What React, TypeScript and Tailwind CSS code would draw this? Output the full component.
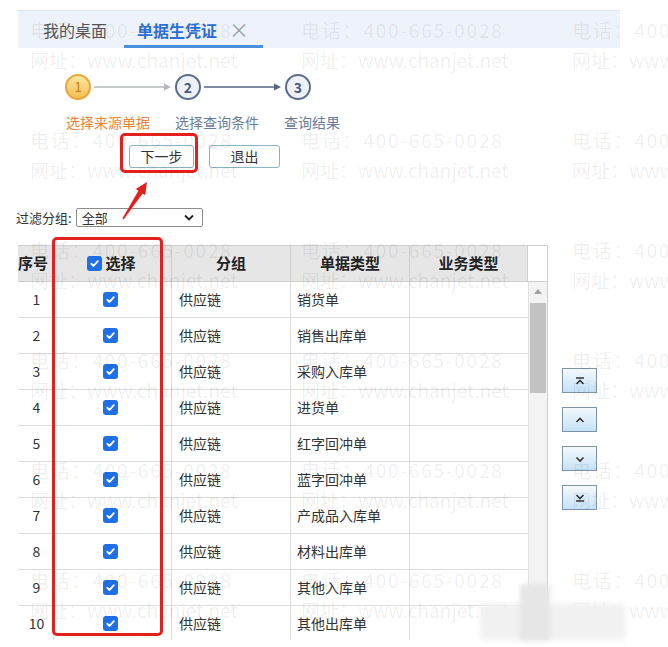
import React from "react";

const rows = [
  { no: 1, group: "供应链", type: "销货单" },
  { no: 2, group: "供应链", type: "销售出库单" },
  { no: 3, group: "供应链", type: "采购入库单" },
  { no: 4, group: "供应链", type: "进货单" },
  { no: 5, group: "供应链", type: "红字回冲单" },
  { no: 6, group: "供应链", type: "蓝字回冲单" },
  { no: 7, group: "供应链", type: "产成品入库单" },
  { no: 8, group: "供应链", type: "材料出库单" },
  { no: 9, group: "供应链", type: "其他入库单" },
  { no: 10, group: "供应链", type: "其他出库单" },
];

const Check: React.FC = () => (
  <div className="flex h-[15px] w-[15px] items-center justify-center rounded-[3px] bg-[#1f6fe5]">
    <svg width="11" height="11" viewBox="0 0 12 12">
      <path d="M2.5 6.3 L5 8.7 L9.6 3.4" fill="none" stroke="#fff" strokeWidth="2" strokeLinecap="round" strokeLinejoin="round" />
    </svg>
  </div>
);

const StepLine: React.FC<{ color: string }> = ({ color }) => (
  <svg width="78" height="10" viewBox="0 0 78 10" className="mx-[3px]">
    <line x1="0" y1="5" x2="72" y2="5" stroke={color} strokeWidth="1.5" />
    <path d="M70 1.5 L77 5 L70 8.5 Z" fill={color} />
  </svg>
);

const SideBtn: React.FC<{ kind: "top" | "up" | "down" | "bottom" }> = ({ kind }) => (
  <div className="flex h-[25px] w-[35px] items-center justify-center border border-[#7f93a6] bg-gradient-to-b from-[#f4f9fd] to-[#c5e2f7]">
    <svg width="12" height="10" viewBox="0 0 12 10">
      {kind === "top" && (
        <>
          <line x1="2" y1="2" x2="10" y2="2" stroke="#333" strokeWidth="1.5" />
          <path d="M2.5 8 L6 4.5 L9.5 8" fill="none" stroke="#333" strokeWidth="1.6" />
        </>
      )}
      {kind === "up" && <path d="M2.5 7 L6 3.5 L9.5 7" fill="none" stroke="#333" strokeWidth="1.6" />}
      {kind === "down" && <path d="M2.5 3.5 L6 7 L9.5 3.5" fill="none" stroke="#333" strokeWidth="1.6" />}
      {kind === "bottom" && (
        <>
          <path d="M2.5 2 L6 5.5 L9.5 2" fill="none" stroke="#333" strokeWidth="1.6" />
          <line x1="2" y1="8" x2="10" y2="8" stroke="#333" strokeWidth="1.5" />
        </>
      )}
    </svg>
  </div>
);

const Watermark: React.FC = () => {
  const cols = [30, 301, 572];
  const rowsY = [20, 130, 240, 350, 460, 570];
  return (
    <div className="pointer-events-none absolute inset-0 text-[19px] text-black/[0.07]">
      {rowsY.map((y) =>
        cols.map((x) => (
          <div key={`${x}-${y}`} className="absolute whitespace-nowrap leading-[30px]" style={{ left: x, top: y - 5 }}>
            <div className="tracking-[1.8px]">电话：400-665-0028</div>
            <div className="tracking-[0px]">网址：www.chanjet.net</div>
          </div>
        ))
      )}
    </div>
  );
};

const App: React.FC = () => {
  return (
    <div
      className="relative h-[647px] w-[668px] overflow-hidden bg-white text-[#333]"
      style={{ fontFamily: '"Noto Sans CJK SC", "Liberation Sans", sans-serif' }}
    >
      {/* 頁籤列 */}
      <div className="ml-[18px] mt-[10px] flex h-[38px] w-[602px] items-stretch border-t border-[#dfe7f1] bg-[#eef3fb]">
        <div className="flex items-center pl-[25px] pr-[17px] text-[16px] text-[#555]">我的桌面</div>
        <div className="flex items-center border-b-[3px] border-[#4a8ee2] pl-[13px] pr-[14px] pt-[3px]">
          <span className="text-[16px] font-bold text-[#2f6fd6]">单据生凭证</span>
          <span className="ml-[12px] text-[20px] leading-none text-[#9aa3ad]">×</span>
        </div>
      </div>

      {/* 步驟 */}
      <div className="ml-[65px] mt-[26px] flex h-[26px] items-center">
        <div className="flex h-[26px] w-[26px] items-center justify-center rounded-full border-2 border-[#e7a73a] bg-gradient-to-b from-[#fce6a0] to-[#f2bf4a] text-[13px] text-[#c27c16]">
          1
        </div>
        <StepLine color="#b5b8bd" />
        <div className="flex h-[26px] w-[26px] items-center justify-center rounded-full border-2 border-[#5c6d8a] bg-[#eef2f8] text-[14px] font-bold text-[#4a5b7a]">
          2
        </div>
        <StepLine color="#56667f" />
        <div className="flex h-[26px] w-[26px] items-center justify-center rounded-full border-2 border-[#5c6d8a] bg-[#eef2f8] text-[14px] font-bold text-[#4a5b7a]">
          3
        </div>
      </div>
      <div className="ml-[66px] mt-[14px] flex h-[16px] items-center text-[14px] leading-[16px]">
        <span className="w-[109px] text-[#e8853a]">选择来源单据</span>
        <span className="w-[109px] text-[#6a7c9c]">选择查询条件</span>
        <span className="text-[#6a7c9c]">查询结果</span>
      </div>

      {/* 按鈕 */}
      <div className="ml-[129px] mt-[15px] flex h-[23px] gap-[15px]">
        <button className="h-[23px] w-[65px] rounded-[3px] border border-[#8ab4c6] bg-white text-[14px] text-[#333]">下一步</button>
        <button className="h-[23px] w-[71px] rounded-[3px] border border-[#8ab4c6] bg-white text-[14px] text-[#333]">退出</button>
      </div>

      {/* 過濾 */}
      <div className="ml-[16px] mt-[40px] flex h-[19px] items-center text-[13px]">
        <span className="text-[#333]">过滤分组:</span>
        <div className="ml-[4px] flex h-[19px] w-[127px] items-center justify-between rounded-[2px] border border-[#8d8d8d] bg-white pl-[5px] pr-[8px]">
          <span className="text-[13px] leading-none">全部</span>
          <svg width="10" height="7" viewBox="0 0 10 7">
            <path d="M1 1.5 L5 5.5 L9 1.5" fill="none" stroke="#222" strokeWidth="1.8" />
          </svg>
        </div>
      </div>

      {/* 表格 + 側邊按鈕 */}
      <div className="ml-[18px] mt-[18px] flex">
        <div className="h-[395px] w-[530px] overflow-hidden border-r border-t border-[#cfcfcf]">
          <div className="flex h-[36px] border-b border-[#cfcfcf] text-[15px] font-bold text-[#222]">
            <div className="flex w-[35px] items-center bg-[#e6e6e6]">序号</div>
            <div className="flex w-[118px] items-center justify-center gap-[3px] border-l border-[#cfcfcf] bg-[#e6e6e6] pr-[2px]">
              <Check />
              <span>选择</span>
            </div>
            <div className="flex w-[119px] items-center justify-center border-l border-[#cfcfcf] bg-[#e6e6e6]">分组</div>
            <div className="flex w-[119px] items-center justify-center border-l border-[#cfcfcf] bg-[#e6e6e6]">单据类型</div>
            <div className="flex w-[119px] items-center justify-center border-x border-[#cfcfcf] bg-[#e6e6e6]">业务类型</div>
            <div className="flex-1 bg-white" />
          </div>
          <div className="flex">
            <div className="w-[510px]">
              {rows.map((r) => (
                <div key={r.no} className="flex h-[36px] border-b border-[#dcdcdc] text-[14px] text-[#333]">
                  <div className="flex w-[35px] items-center justify-center pl-[2px]">{r.no}</div>
                  <div className="flex w-[118px] items-center justify-center border-l border-[#dcdcdc] pr-[4px]">
                    <Check />
                  </div>
                  <div className="flex w-[119px] items-center border-l border-[#dcdcdc] pl-[7px]">{r.group}</div>
                  <div className="flex w-[119px] items-center border-l border-[#dcdcdc] pl-[6px]">{r.type}</div>
                  <div className="w-[119px] border-l border-[#dcdcdc]" />
                </div>
              ))}
            </div>
            <div className="flex w-[20px] flex-col items-center border-l border-[#e2e2e2] bg-[#f3f3f3] pt-[7px]">
              <svg width="8" height="5" viewBox="0 0 8 5">
                <path d="M0 5 L4 0 L8 5 Z" fill="#a3a3a3" />
              </svg>
              <div className="mt-[9px] h-[90px] w-[16px] bg-[#c2c2c2]" />
            </div>
          </div>
        </div>
        <div className="ml-[14px] mt-[123px] flex flex-col gap-[14px]">
          <SideBtn kind="top" />
          <SideBtn kind="up" />
          <SideBtn kind="down" />
          <SideBtn kind="bottom" />
        </div>
      </div>

      <Watermark />

      {/* 紅框標註 */}
      <div className="pointer-events-none absolute left-[120px] top-[133px] h-[40px] w-[78px] rounded-[5px] border-[3px] border-[#e3201b]" />
      <div className="pointer-events-none absolute left-[52px] top-[237px] h-[399px] w-[111px] rounded-[5px] border-[3px] border-[#e3201b]" />
      <svg className="pointer-events-none absolute left-[115px] top-[176px]" width="40" height="48" viewBox="0 0 40 48">
        <polygon points="32,6 30.2,19.3 27.6,17.5 8.6,43.4 7.4,42.6 23.4,14.7 20.8,12.9" fill="#e3201b" />
      </svg>

      {/* 模糊區塊 */}
      <div className="pointer-events-none absolute left-[480px] top-[604px] h-[36px] w-[145px] bg-[#f1f1f1] blur-[3px]" />
      <div className="pointer-events-none absolute left-[520px] top-[584px] h-[56px] w-[30px] bg-[#e6e6e6] blur-[2px]" />
    </div>
  );
};

export default App;
